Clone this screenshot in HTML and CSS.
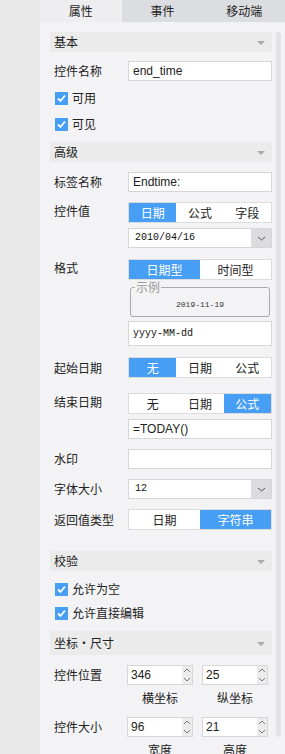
FILE: index.html
```html
<!DOCTYPE html>
<html lang="zh-CN">
  <head>
    <meta charset="UTF-8" />
    <meta name="viewport" content="width=device-width, initial-scale=1.0" />
    <title>属性面板</title>
    <link rel="stylesheet" href="styles.css">
  </head>
  <body>
    <div class="app">
      <div class="side"></div>
      <div class="panel">
        <div class="tabs">
          <div class="tab active">属性</div>
          <div class="tab">事件</div>
          <div class="tab">移动端</div>
        </div>
        <div class="body">
          <div class="content">

            <div class="sec-head">基本<span class="caret"></span></div>
            <div class="row gap9">
              <div class="label">控件名称</div>
              <div class="ctrl"><div class="input latin">end_time</div></div>
            </div>
            <div class="check first"><span class="box"><svg viewBox="0 0 13 13" width="13" height="13"><polyline points="3,6.5 5.5,9 10,3.5" fill="none" stroke="#fff" stroke-width="1.8"/></svg></span>可用</div>
            <div class="check"><span class="box"><svg viewBox="0 0 13 13" width="13" height="13"><polyline points="3,6.5 5.5,9 10,3.5" fill="none" stroke="#fff" stroke-width="1.8"/></svg></span>可见</div>

            <div class="sec-head gap5">高级<span class="caret"></span></div>
            <div class="row gap10">
              <div class="label">标签名称</div>
              <div class="ctrl"><div class="input latin">Endtime:</div></div>
            </div>
            <div class="row gap10">
              <div class="label top">控件值</div>
              <div class="ctrl">
                <div class="seg">
                  <div class="seg-item on">日期</div>
                  <div class="seg-item">公式</div>
                  <div class="seg-item">字段</div>
                </div>
                <div class="select gap5">
                  <span class="mono">2010/04/16</span>
                  <span class="drop"><svg viewBox="0 0 9 5" width="9" height="5"><polyline points="1,1 4.5,4 8,1" fill="none" stroke="#555" stroke-width="1"/></svg></span>
                </div>
              </div>
            </div>
            <div class="row gap11">
              <div class="label top">格式</div>
              <div class="ctrl">
                <div class="seg">
                  <div class="seg-item on">日期型</div>
                  <div class="seg-item">时间型</div>
                </div>
                <div class="sample">
                  <span class="sample-legend">示例</span>
                  <div class="sample-text">2019-11-19</div>
                </div>
                <div class="input tall mono">yyyy-MM-dd</div>
              </div>
            </div>
            <div class="row gap11">
              <div class="label">起始日期</div>
              <div class="ctrl">
                <div class="seg">
                  <div class="seg-item on">无</div>
                  <div class="seg-item">日期</div>
                  <div class="seg-item">公式</div>
                </div>
              </div>
            </div>
            <div class="row gap15">
              <div class="label top">结束日期</div>
              <div class="ctrl">
                <div class="seg">
                  <div class="seg-item">无</div>
                  <div class="seg-item">日期</div>
                  <div class="seg-item on">公式</div>
                </div>
                <div class="input latin gap5">=TODAY()</div>
              </div>
            </div>
            <div class="row gap10">
              <div class="label">水印</div>
              <div class="ctrl"><div class="input"></div></div>
            </div>
            <div class="row gap10">
              <div class="label">字体大小</div>
              <div class="ctrl">
                <div class="select">
                  <span class="mono">12</span>
                  <span class="drop"><svg viewBox="0 0 9 5" width="9" height="5"><polyline points="1,1 4.5,4 8,1" fill="none" stroke="#555" stroke-width="1"/></svg></span>
                </div>
              </div>
            </div>
            <div class="row gap10">
              <div class="label">返回值类型</div>
              <div class="ctrl">
                <div class="seg">
                  <div class="seg-item">日期</div>
                  <div class="seg-item on">字符串</div>
                </div>
              </div>
            </div>

            <div class="sec-head gap21">校验<span class="caret"></span></div>
            <div class="check small first6"><span class="box"><svg viewBox="0 0 13 13" width="13" height="13"><polyline points="3,6.5 5.5,9 10,3.5" fill="none" stroke="#fff" stroke-width="1.8"/></svg></span>允许为空</div>
            <div class="check small"><span class="box"><svg viewBox="0 0 13 13" width="13" height="13"><polyline points="3,6.5 5.5,9 10,3.5" fill="none" stroke="#fff" stroke-width="1.8"/></svg></span>允许直接编辑</div>

            <div class="sec-head tall gap6">坐标·尺寸<span class="caret"></span></div>
            <div class="row gap10">
              <div class="label">控件位置</div>
              <div class="ctrl pair">
                <div class="spin">
                  <span class="spin-val">346</span>
                  <span class="spin-btn">
                    <svg viewBox="0 0 8 5" width="8" height="5"><polyline points="1,4 4,1 7,4" fill="none" stroke="#777" stroke-width="1"/></svg>
                    <svg viewBox="0 0 8 5" width="8" height="5"><polyline points="1,1 4,4 7,1" fill="none" stroke="#777" stroke-width="1"/></svg>
                  </span>
                </div>
                <div class="spin">
                  <span class="spin-val">25</span>
                  <span class="spin-btn">
                    <svg viewBox="0 0 8 5" width="8" height="5"><polyline points="1,4 4,1 7,4" fill="none" stroke="#777" stroke-width="1"/></svg>
                    <svg viewBox="0 0 8 5" width="8" height="5"><polyline points="1,1 4,4 7,1" fill="none" stroke="#777" stroke-width="1"/></svg>
                  </span>
                </div>
              </div>
            </div>
            <div class="captions">
              <span>横坐标</span>
              <span>纵坐标</span>
            </div>
            <div class="row gap11">
              <div class="label">控件大小</div>
              <div class="ctrl pair">
                <div class="spin">
                  <span class="spin-val">96</span>
                  <span class="spin-btn">
                    <svg viewBox="0 0 8 5" width="8" height="5"><polyline points="1,4 4,1 7,4" fill="none" stroke="#777" stroke-width="1"/></svg>
                    <svg viewBox="0 0 8 5" width="8" height="5"><polyline points="1,1 4,4 7,1" fill="none" stroke="#777" stroke-width="1"/></svg>
                  </span>
                </div>
                <div class="spin">
                  <span class="spin-val">21</span>
                  <span class="spin-btn">
                    <svg viewBox="0 0 8 5" width="8" height="5"><polyline points="1,4 4,1 7,4" fill="none" stroke="#777" stroke-width="1"/></svg>
                    <svg viewBox="0 0 8 5" width="8" height="5"><polyline points="1,1 4,4 7,1" fill="none" stroke="#777" stroke-width="1"/></svg>
                  </span>
                </div>
              </div>
            </div>
            <div class="captions">
              <span>宽度</span>
              <span>高度</span>
            </div>

          </div>
          <div class="scrollbar"></div>
        </div>
      </div>
    </div>
  </body>
</html>
```

FILE: styles.css
```css
* {
  box-sizing: border-box;
}
body {
  margin: 0;
  font-family: "Noto Sans CJK SC", "Liberation Sans", sans-serif;
  font-size: 12px;
  line-height: 16px;
  color: #222;
}
.app {
  display: flex;
  height: 754px;
  overflow: hidden;
}
.side {
  width: 40px;
  background: #e8e8e8;
}
.panel {
  width: 245px;
  background: #f3f3f5;
}

/* tabs */
.tabs {
  display: flex;
  height: 22px;
  background: #dcdde0;
}
.tab {
  flex: 1;
  text-align: center;
  line-height: 22px;
}
.tab.active {
  background: #eeeef0;
}

.body {
  display: flex;
  padding-left: 10px;
}
.content {
  width: 222px;
  padding-top: 10px;
}
.scrollbar {
  width: 5px;
  height: 705px;
  margin-left: 4px;
  margin-top: 10px;
  background: #e3e3e5;
  border-radius: 3px;
}

/* section headers */
.sec-head {
  display: flex;
  align-items: center;
  justify-content: space-between;
  height: 20px;
  padding: 0 7px 0 4px;
  background: #ebebeb;
}
.sec-head.tall {
  height: 24px;
}
.caret {
  width: 0;
  height: 0;
  margin-top: 2px;
  border-left: 4px solid transparent;
  border-right: 4px solid transparent;
  border-top: 4px solid #aaa;
}

/* spacing */
.gap5 { margin-top: 5px; }
.gap6 { margin-top: 6px; }
.gap9 { margin-top: 9px; }
.gap10 { margin-top: 10px; }
.gap11 { margin-top: 11px; }
.gap15 { margin-top: 15px; }
.gap21 { margin-top: 21px; }

/* form rows */
.row {
  display: flex;
  align-items: center;
}
.row:has(.top) {
  align-items: flex-start;
}
.label {
  width: 78px;
  padding-left: 4px;
  flex-shrink: 0;
}
.label.top {
  padding-top: 1px;
}
.ctrl {
  width: 144px;
}
.input {
  height: 20px;
  padding-left: 4px;
  background: #fff;
  border: 1px solid #d6d6d6;
  line-height: 18px;
  white-space: nowrap;
}
.input.tall {
  height: 25px;
  line-height: 23px;
}
.latin {
  font-family: "Liberation Sans", Arial, sans-serif;
  font-size: 12px;
}
.mono {
  font-family: "Liberation Mono", monospace;
  font-size: 10px;
  color: #111;
}

/* checkboxes */
.check {
  display: flex;
  align-items: center;
  height: 26px;
  padding-left: 5px;
}
.check.first {
  margin-top: 4px;
}
.check.small {
  height: 24px;
}
.check.first6 {
  margin-top: 6px;
}
.box {
  display: flex;
  width: 13px;
  height: 13px;
  margin-right: 4px;
  background: #469ef5;
}

/* segmented buttons */
.seg {
  display: flex;
  height: 21px;
  background: #fff;
  border: 1px solid #dcdcdc;
}
.seg-item {
  flex: 1;
  text-align: center;
  line-height: 19px;
}
.seg-item.on {
  background: #469ef5;
  color: #fff;
}

/* select */
.select {
  display: flex;
  align-items: center;
  height: 20px;
  padding-left: 6px;
  background: #fff;
  border: 1px solid #d6d6d6;
}
.select .mono {
  flex: 1;
}
.drop {
  display: flex;
  align-items: center;
  justify-content: center;
  width: 20px;
  height: 18px;
  background: #dcdcde;
}

/* sample box */
.sample {
  position: relative;
  height: 30px;
  margin: 7px 2px 4px;
  border: 1px solid #a9a9a9;
  border-radius: 3px;
}
.sample-legend {
  position: absolute;
  top: -8px;
  left: 4px;
  padding: 0 1px;
  background: #f3f3f5;
  color: #999;
  line-height: 14px;
}
.sample-text {
  padding-top: 11px;
  text-align: center;
  font-family: "Liberation Mono", monospace;
  font-size: 8px;
  line-height: 12px;
  color: #333;
}

/* spinners */
.pair {
  display: flex;
  gap: 9px;
  margin-left: -1px;
}
.spin {
  display: flex;
  width: 66px;
  height: 20px;
  background: #fff;
  border: 1px solid #d6d6d6;
}
.spin-val {
  flex: 1;
  padding-left: 3px;
  font-family: "Liberation Sans", Arial, sans-serif;
  line-height: 18px;
}
.spin-btn {
  display: flex;
  flex-direction: column;
  align-items: center;
  justify-content: space-around;
  width: 10px;
  background: #ececec;
}
.captions {
  display: flex;
  gap: 9px;
  margin-top: 5px;
  padding-left: 77px;
}
.captions span {
  width: 66px;
  text-align: center;
}
```
